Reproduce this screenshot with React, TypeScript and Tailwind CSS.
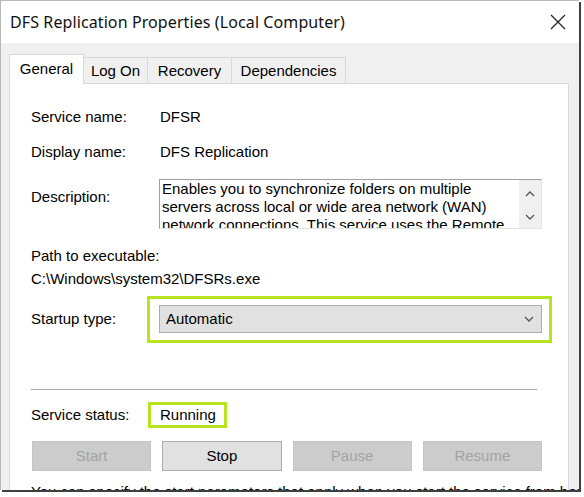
import React from 'react';

const body = { fontFamily: '"Liberation Sans", Arial, sans-serif' };
const title = { fontFamily: '"Noto Sans", "Open Sans", sans-serif' };

const Chevron: React.FC<{ up?: boolean; w?: number }> = ({ up, w = 10 }) => (
  <svg width={w} height={6} viewBox="0 0 10 6" fill="none">
    <path d={up ? 'M1 5 L5 1 L9 5' : 'M1 1 L5 5 L9 1'} stroke="#555" strokeWidth="1.3" />
  </svg>
);

const tabs = [
  { name: 'General', w: 'w-[75px]' },
  { name: 'Log On', w: 'w-[64px]' },
  { name: 'Recovery', w: 'w-[84px]' },
  { name: 'Dependencies', w: 'w-[114px]' },
];

const buttons = [
  { name: 'Start', enabled: false },
  { name: 'Stop', enabled: true },
  { name: 'Pause', enabled: false },
  { name: 'Resume', enabled: false },
];

export default function App() {
  return (
    <div className="w-[584px] h-[497px] bg-white overflow-hidden text-[15px] text-black" style={body}>
      <div className="w-[579px] h-[490px] bg-[#f0f0f0] border-t border-l border-[#b8b8b8] shadow-[2px_2px_0_0_#3f3f3f] overflow-hidden flex flex-col">
        {/* title bar */}
        <div className="h-[42px] shrink-0 bg-white flex items-center justify-between pl-[9px] pr-[12px]">
          <span className="text-[16px] tracking-[0.1px] text-[#111]" style={title}>
            DFS Replication Properties (Local Computer)
          </span>
          <svg width="16" height="16" viewBox="0 0 16 16" className="mr-[1px]">
            <path d="M1 1 L15 15 M15 1 L1 15" stroke="#222" strokeWidth="1.2" />
          </svg>
        </div>

        {/* tabs */}
        <div className="flex items-end pl-[8px] mt-[11px] h-[29px]">
          {tabs.map((t, i) =>
            i === 0 ? (
              <div
                key={t.name}
                className={`${t.w} h-[30px] -mb-px relative z-10 bg-white border border-b-0 border-[#d9d9d9] flex items-center justify-center`}
              >
                {t.name}
              </div>
            ) : (
              <div
                key={t.name}
                className={`${t.w} h-[26px] border-t border-r border-[#d9d9d9] bg-[#f0f0f0] flex items-center justify-center pt-[1px]`}
              >
                {t.name}
              </div>
            )
          )}
        </div>

        {/* panel */}
        <div className="ml-[8px] w-[560px] flex-1 bg-white border border-[#d9d9d9] pl-[21px] flex flex-col">
          <div className="flex h-[20px] items-center mt-[23px]">
            <span className="w-[129px]">Service name:</span>
            <span>DFSR</span>
          </div>
          <div className="flex h-[20px] items-center mt-[15px]">
            <span className="w-[129px]">Display name:</span>
            <span>DFS Replication</span>
          </div>
          <div className="flex mt-[17px]">
            <span className="w-[128px] mt-[8px] leading-[20px]">Description:</span>
            <div className="w-[383px] h-[50px] border border-[#a0a0a0] border-r-[#e3e3e3] border-b-[#e3e3e3] flex overflow-hidden">
              <div className="flex-1 h-[48px] pl-[2px] leading-[18px] overflow-hidden">
                Enables you to synchronize folders on multiple servers across local or wide area network (WAN) network
                connections. This service uses the Remote
              </div>
              <div className="w-[22px] bg-[#f0f0f0] flex flex-col items-center pt-[11px] gap-[17px]">
                <Chevron up />
                <Chevron />
              </div>
            </div>
          </div>
          <div className="h-[20px] leading-[20px] mt-[17px]">Path to executable:</div>
          <div className="h-[20px] leading-[20px] mt-[3px]">C:\Windows\system32\DFSRs.exe</div>

          <div className="flex items-center mt-[7px]">
            <span className="w-[116px]">Startup type:</span>
            <div className="w-[405px] h-[47px] border-[3px] border-[#b6e51e] pt-[6px] pl-[9px]">
              <div className="w-[383px] h-[28px] bg-[#e1e1e1] border border-[#adadad] flex items-center justify-between pl-[6px] pr-[6px]">
                <span>Automatic</span>
                <Chevron w={12} />
              </div>
            </div>
          </div>

          <div className="w-[506px] h-px bg-[#a9a9a9] mt-[46px]" />

          <div className="flex items-center mt-[12px]">
            <span className="w-[117px]">Service status:</span>
            <div className="w-[79px] h-[26px] border-[3px] border-[#b6e51e] flex items-center pl-[9px]">Running</div>
          </div>

          <div className="grid grid-cols-4 gap-x-[11px] w-[510px] ml-[1px] mt-[13px]">
            {buttons.map((b) => (
              <div
                key={b.name}
                className={
                  b.enabled
                    ? 'h-[30px] bg-[#e1e1e1] border border-[#adadad] flex items-center justify-center'
                    : 'h-[30px] bg-[#cccccc] border border-[#c4c4c4] text-[#a3a3a3] flex items-center justify-center'
                }
              >
                {b.name}
              </div>
            ))}
          </div>

          <div className="mt-[11px] whitespace-nowrap leading-[20px]">
            You can specify the start parameters that apply when you start the service from here.
          </div>
        </div>
      </div>
    </div>
  );
}
